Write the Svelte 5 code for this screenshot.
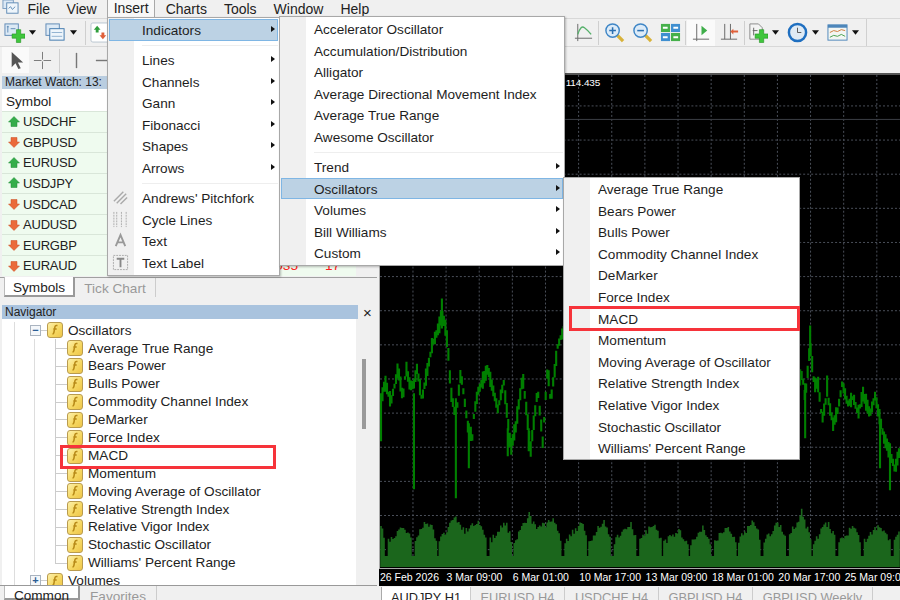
<script>
  const menuNames = ["File", "View", "Insert", "Charts", "Tools", "Window", "Help"];

  const watch = [
    { name: "USDCHF", up: true },
    { name: "GBPUSD", up: false },
    { name: "EURUSD", up: true },
    { name: "USDJPY", up: true },
    { name: "USDCAD", up: false },
    { name: "AUDUSD", up: false },
    { name: "EURGBP", up: false },
    { name: "EURAUD", up: false, ask: "0035", spread: "17" },
  ];

  const oscillators = [
    "Average True Range", "Bears Power", "Bulls Power", "Commodity Channel Index",
    "DeMarker", "Force Index", "MACD", "Momentum", "Moving Average of Oscillator",
    "Relative Strength Index", "Relative Vigor Index", "Stochastic Oscillator",
    "Williams' Percent Range",
  ];

  const insertMenu = [
    ["Indicators", "Lines", "Channels", "Gann", "Fibonacci", "Shapes", "Arrows"],
    ["Andrews' Pitchfork", "Cycle Lines", "Text", "Text Label"],
  ];
  const indicatorsTop = ["Accelerator Oscillator", "Accumulation/Distribution", "Alligator",
    "Average Directional Movement Index", "Average True Range", "Awesome Oscillator"];
  const indicatorsSub = ["Trend", "Oscillators", "Volumes", "Bill Williams", "Custom"];

  const dates = ["26 Feb 2026", "3 Mar 09:00", "6 Mar 01:00", "10 Mar 17:00", "13 Mar 09:00",
    "18 Mar 01:00", "20 Mar 17:00", "25 Mar 09:00"];
  const chartTabs = ["AUDJPY H1", "EURUSD H4", "USDCHF H4", "GBPUSD H4", "GBPUSD Weekly", "VIX"];

  // fixed seed so the chart comes out the same every time
  let seed = 42;
  const rnd = () => {
    seed = (seed * 16807) % 2147483647;
    return seed / 2147483647;
  };

  const lerp = (pts, x) => {
    for (let i = 1; i < pts.length; i++) {
      if (x <= pts[i][0]) {
        const [x0, y0] = pts[i - 1];
        const [x1, y1] = pts[i];
        return y0 + ((y1 - y0) * (x - x0)) / (x1 - x0);
      }
    }
    return pts[pts.length - 1][1];
  };

  const priceLeft = [[380,403],[384,383],[390,403],[397,370],[402,400],[405,367],[409,387],[413,385],[416,370],[421,400],[426,373],[431,347],[438,328],[441,315],[444,325],[447,347],[450,393],[455,420],[460,373],[467,427],[472,440],[473,417],[477,393],[487,370],[497,410],[503,383],[510,450],[515,427],[522,378],[530,450],[537,390],[542,443],[547,367],[550,403],[557,347],[564,327]];
  const priceRight = [[799,380],[802,375],[805,400],[810,345],[814,385],[818,385],[822,420],[827,395],[833,425],[838,410],[842,385],[848,405],[853,398],[858,415],[863,395],[870,415],[875,397],[880,420],[883,435],[890,455],[895,470],[900,450]];
  const spikes = [[380,395,443],[413,395,491],[455,400,500],[468,425,470],[507,430,458],[528,430,453],[441,300,330],[810,327,350],[805,385,440],[827,377,395],[880,425,470],[890,445,492]];

  const priceSeries = (pts, from, to) => {
    let d = "";
    for (let x = from; x <= to; x += 1.5) {
      const y = lerp(pts, x);
      const h = 3 + rnd() * 6;
      d += `M${x} ${(y - h + rnd() * 3).toFixed(1)}V${(y + h).toFixed(1)}`;
    }
    return d;
  };
  const pricePath =
    priceSeries(priceLeft, 380, 563) +
    priceSeries(priceRight, 800, 900) +
    spikes.map(([x, a, b]) => `M${x} ${a}V${b}`).join("");

  const volPeaks = [[380,527],[385,557],[403,528],[412,557],[422,528],[430,525],[437,557],[455,515],[463,537],[480,522],[487,557],[505,522],[512,557],[528,513],[537,533],[553,517],[562,557],[583,522],[587,560],[603,520],[612,557],[630,523],[637,557],[653,525],[662,557],[679,537],[689,560],[703,532],[712,560],[728,527],[737,557],[753,517],[762,557],[778,525],[787,550],[802,508],[812,557],[828,523],[837,557],[853,530],[862,560],[878,528],[892,557],[900,540]];
  const notches = volPeaks.filter(([, y]) => y >= 550).map(([x]) => x);
  let volumePath = "";
  for (let x = 380; x < 900; x += 1.5) {
    // valleys are shallow apart from a thin dark notch every session
    let top = lerp(volPeaks, x);
    if (top > 520) top = 520 + (top - 520) * 0.62;
    top += rnd() * 7 - 1;
    if (notches.some((n) => Math.abs(n - x) < 1.5)) top = 558;
    volumePath += `M${x} ${top.toFixed(1)}V569`;
  }

  const gridX = Array.from({ length: 15 }, (_, i) => 412 + i * 33.2);
  const gridY = Array.from({ length: 14 }, (_, i) => 107 + i * 34.2);
</script>

{#snippet fIcon()}
  <span class="f-icon">
    <svg viewBox="0 0 14 14">
      <path d="M9.500 2.500H8.300Q7.200 2.500 6.900 4L5.900 9.500Q5.600 11 4.500 11M5.300 6H8.700" fill="none" stroke="#b88a18" stroke-width="1.500" />
    </svg>
  </span>
{/snippet}

{#snippet caret()}
  <svg class="caret" viewBox="0 0 8 5"><path d="M0 0H8L4 5Z" fill="#111" /></svg>
{/snippet}

{#snippet plusBadge()}
  <path d="M13 8h4.500v4.500H22V17h-4.500v4.500H13V17H8.500v-4.500H13Z" fill="#3fc63c" stroke="#1c8f1c" stroke-width="0.600" />
{/snippet}

<div class="app">
  <nav class="menubar">
    <svg class="app-icon" viewBox="0 0 18 18">
      <rect x="1" y="0" width="11" height="9" fill="#dbe8f5" stroke="#7a9cc0" />
      <rect x="5" y="3" width="12" height="11" fill="#eef5fb" stroke="#5f8ab5" />
      <path d="M7 9l2-2 2 3 3-3" fill="none" stroke="#5f8ab5" />
    </svg>
    {#each menuNames as name}
      <span class="menu-name" class:open={name === "Insert"}>{name}</span>
    {/each}
  </nav>

  <div class="toolbar">
    <div class="tools-left">
      <svg class="icon" viewBox="0 0 22 22">
        <rect x="1" y="2" width="14" height="12" fill="#dce9f5" stroke="#5f8ab5" />
        <path d="M4 4v7M3 5h2M7 7h5" stroke="#5f8ab5" />
        {@render plusBadge()}
      </svg>
      {@render caret()}
      <svg class="icon profiles" viewBox="0 0 22 22">
        <rect x="1" y="2" width="14" height="12" fill="#dce9f5" stroke="#5f8ab5" />
        <rect x="5" y="7" width="15" height="12" fill="#eef5fb" stroke="#3f77ad" />
        <path d="M7 11h11M7 15h11" stroke="#8fb0d0" />
      </svg>
      {@render caret()}
      <span class="tool-sep"></span>
      <svg class="icon" viewBox="0 0 22 22">
        <rect x="1" y="1" width="20" height="20" rx="2" fill="#fff" stroke="#b8c4d0" />
        <path d="M7.500 4l3.500 4h-2v3h-3V8H4Z" fill="#2f9e3c" />
        <path d="M13.500 18l-3.500-4h2v-3h3v3h2Z" fill="#e0603a" />
      </svg>
    </div>
    <div class="tools-right">
      <span class="tool">
        <svg class="icon" viewBox="0 0 22 22">
          <path d="M5 2v15h15M2 17h3M5 20v-3" fill="none" stroke="#666" />
          <path d="M5 13Q8 3 12 6T19 13" fill="none" stroke="#55b06a" stroke-width="1.400" />
        </svg>
      </span>
      <span class="tool-sep"></span>
      <span class="tool">
        <svg class="icon" viewBox="0 0 22 22">
          <path d="M13 13l7 7" stroke="#d8b23a" stroke-width="3.500" />
          <circle cx="9" cy="9" r="7" fill="#dcebf8" stroke="#3f86c6" stroke-width="1.500" />
          <path d="M5.500 9h7M9 5.500v7" stroke="#2a6fb0" stroke-width="1.600" />
        </svg>
      </span>
      <span class="tool">
        <svg class="icon" viewBox="0 0 22 22">
          <path d="M13 13l7 7" stroke="#d8b23a" stroke-width="3.500" />
          <circle cx="9" cy="9" r="7" fill="#dcebf8" stroke="#3f86c6" stroke-width="1.500" />
          <path d="M5.500 9h7" stroke="#2a6fb0" stroke-width="1.600" />
        </svg>
      </span>
      <span class="tool">
        <svg class="icon" viewBox="0 0 22 22">
          <rect x="1" y="2" width="9.500" height="8.500" fill="#45b04a" />
          <rect x="11.500" y="2" width="9.500" height="8.500" fill="#3f8fd0" />
          <rect x="1" y="11.500" width="9.500" height="8.500" fill="#3f8fd0" />
          <rect x="11.500" y="11.500" width="9.500" height="8.500" fill="#45b04a" />
          <path d="M3 6h5M14 6h5M3 16h5M14 16h5" stroke="#fff" stroke-width="2" />
        </svg>
      </span>
      <span class="tool-sep"></span>
      <span class="tool pressed">
        <svg class="icon" viewBox="0 0 22 22">
          <path d="M6 2v16M2 18h17M6 20v-2" fill="none" stroke="#666" />
          <path d="M11 4l6 5-6 5Z" fill="#3fae4a" />
        </svg>
      </span>
      <span class="tool">
        <svg class="icon" viewBox="0 0 22 22">
          <path d="M6 2v16M2 18h17M12 2v16" fill="none" stroke="#666" />
          <path d="M20 9h-5v-2l-3 3 3 3v-2h5Z" fill="#e0603a" />
        </svg>
      </span>
      <span class="tool-sep"></span>
      <span class="tool drop">
        <svg class="icon" viewBox="0 0 22 22">
          <path d="M3 2h9l4 4v12H3Z" fill="#f4f4f4" stroke="#888" />
          <path d="M7 6v8M6 9h5" stroke="#666" />
          {@render plusBadge()}
        </svg>
        {@render caret()}
      </span>
      <span class="tool drop">
        <svg class="icon" viewBox="0 0 22 22">
          <circle cx="11" cy="11" r="9" fill="#dfeaf4" stroke="#1f6fc0" stroke-width="2.600" />
          <path d="M11 6v5h4" fill="none" stroke="#555" />
        </svg>
        {@render caret()}
      </span>
      <span class="tool drop">
        <svg class="icon" viewBox="0 0 22 22">
          <rect x="1" y="3" width="20" height="16" fill="#f3f6f3" stroke="#4d86ba" />
          <rect x="1" y="3" width="20" height="3" fill="#4d86ba" />
          <path d="M3 11l4-2 4 1 4-2 4 1" fill="none" stroke="#cf7a3a" />
          <path d="M3 16l4-2 4 1 4-2 4 2" fill="none" stroke="#45a04a" />
        </svg>
        {@render caret()}
      </span>
    </div>
  </div>

  <div class="toolbar second">
    <span class="tool slim pressed">
      <svg class="icon" viewBox="0 0 22 22"><path d="M7 2v16l4-4 3 6 2.500-1-3-6h5.500Z" fill="#555" /></svg>
    </span>
    <span class="tool slim">
      <svg class="icon" viewBox="0 0 22 22"><path d="M11 2v8M11 12v8M2 11h8M12 11h8" stroke="#777" /></svg>
    </span>
    <span class="tool-sep"></span>
    <span class="tool slim">
      <svg class="icon" viewBox="0 0 22 22"><path d="M11 3v16" stroke="#777" stroke-width="1.500" /></svg>
    </span>
    <span class="tool slim">
      <svg class="icon" viewBox="0 0 22 22"><path d="M3 11h16" stroke="#777" stroke-width="1.500" /></svg>
    </span>
  </div>

  <main class="workspace">
    <section class="side">
      <div class="watch">
        <header class="caption">Market Watch: 13:</header>
        <div class="watch-head">Symbol</div>
        {#each watch as row}
          <div class="watch-row">
            <svg class="arrow" viewBox="0 0 14 14">
              {#if row.up}
                <path d="M7 1.500l5.500 5.500H10v4.500H4V7H1.500Z" fill="#35ad4a" stroke="#1f8a35" stroke-width="0.500" />
              {:else}
                <path d="M7 12.500L1.500 7H4V2.500h6V7h2.500Z" fill="#ea6a3a" stroke="#c94f24" stroke-width="0.500" />
              {/if}
            </svg>
            <span class="sym">{row.name}</span>
            <span class="ask">{row.ask ?? ""}</span>
            <span class="spread">{row.spread ?? ""}</span>
          </div>
        {/each}
      </div>
      <div class="tabs">
        <span class="tab active">Symbols</span>
        <span class="tab tick">Tick Chart</span>
      </div>

      <div class="navigator">
        <header class="nav-head">
          <span class="caption nav-caption">Navigator</span>
          <span class="close">×</span>
        </header>
        <div class="tree-wrap">
          <div class="tree">
            <div class="node top">
              <span class="box">−</span>
              {@render fIcon()}
              <span>Oscillators</span>
            </div>
            {#each oscillators as name, i}
              <div class="node leaf" class:last={i === oscillators.length - 1}>
                {@render fIcon()}
                <span>{name}</span>
              </div>
            {/each}
            <div class="node top">
              <span class="box">+</span>
              {@render fIcon()}
              <span>Volumes</span>
            </div>
          </div>
          <div class="scrollbar"><span class="thumb"></span></div>
        </div>
        <div class="tabs nav-tabs">
          <span class="tab active">Common</span>
          <span class="tab">Favorites</span>
        </div>
      </div>
    </section>

    <section class="chart-area">
      <div class="chart">
        <svg class="plot" viewBox="379 76 521 494">
          {#each gridY as y}
            <line x1="379" x2="900" y1={y} y2={y} class="grid" />
          {/each}
          {#each gridX as x}
            <line x1={x} x2={x} y1="76" y2="569" class="grid" />
          {/each}
          <line x1="379" x2="900" y1="120.500" y2="120.500" stroke="#3c3f46" />
          <path d={volumePath} stroke="#1b661c" stroke-width="1.600" fill="none" />
          <path d={pricePath} stroke="#008000" stroke-width="2.100" fill="none" />
          <text x="565" y="87" class="price">114.435</text>
        </svg>
        <div class="axis">
          {#each dates as d}
            <span>{d}</span>
          {/each}
        </div>
      </div>
      <div class="chart-tabs">
        {#each chartTabs as name, i}
          <span class="chart-tab" class:active={i === 0} class:wide={name === "GBPUSD Weekly"}>{name}</span>
        {/each}
      </div>
    </section>
  </main>

  <div class="menu insert">
    {#each insertMenu[0] as name, i}
      <div class="item" class:hot={i === 0}>{name}<i class="more"></i></div>
      {#if i === 0}<div class="sep"></div>{/if}
    {/each}
    <div class="sep"></div>
    {#each insertMenu[1] as name, i}
      <div class="item">
        <svg class="menu-icon" viewBox="0 0 18 18">
          {#if i === 0}
            <path d="M2 13L12 3M5 15L15 5M9 16L16 9" stroke="#aaa" stroke-width="1.500" />
          {:else if i === 1}
            <path d="M2 1v16M5 1v16M10 1v16M15 1v16" stroke="#aaa" stroke-dasharray="2 1" />
          {:else if i === 2}
            <path d="M4 15L9 3l5 12M6 11h6" fill="none" stroke="#999" stroke-width="2" />
          {:else}
            <rect x="1.500" y="1.500" width="15" height="15" fill="none" stroke="#aaa" stroke-dasharray="2 1" />
            <path d="M5 5h8M9 5v9" stroke="#888" stroke-width="2" />
          {/if}
        </svg>
        {name}
      </div>
    {/each}
  </div>

  <div class="menu indicators">
    {#each indicatorsTop as name}
      <div class="item">{name}</div>
    {/each}
    <div class="sep"></div>
    {#each indicatorsSub as name}
      <div class="item" class:hot={name === "Oscillators"}>{name}<i class="more"></i></div>
    {/each}
  </div>

  <div class="menu osc">
    {#each oscillators as name}
      <div class="item">{name}</div>
    {/each}
  </div>

  <div class="callout callout-nav"></div>
  <div class="callout callout-menu"></div>
</div>

<style>
  :global(body) {
    margin: 0;
    background: #f0f0f0;
  }
  .app {
    position: relative;
    width: 900px;
    height: 600px;
    overflow: hidden;
    display: flex;
    flex-direction: column;
    background: #f0f0f0;
    color: #222;
    font: 13.600px/1 "Liberation Sans", sans-serif;
  }

  .menubar {
    height: 17px;
    display: flex;
    align-items: center;
    padding-left: 2px;
    font-size: 14px;
  }
  .app-icon {
    width: 17px;
    height: 17px;
  }
  .menu-name {
    padding: 0 8.500px;
  }
  .menu-name:nth-of-type(1) {
    padding-right: 8px;
  }
  .menu-name.open {
    height: 17px;
    line-height: 17px;
    box-sizing: border-box;
    margin: 0 2.500px 0 1.500px;
    padding: 0 5px 0 6px;
    border-left: 1px solid #a8a8a8;
    border-right: 1px solid #a8a8a8;
    background: #f8f8f8;
  }

  .toolbar {
    height: 27px;
    margin-top: 1px;
    display: flex;
    justify-content: space-between;
    border-top: 1px solid #d8d8d8;
    border-bottom: 1px solid #d8d8d8;
    padding-right: 33px;
  }
  .tools-left,
  .tools-right {
    display: flex;
    align-items: center;
  }
  .tools-left {
    padding-left: 4px;
  }
  .tools-right {
    border-right: 1px solid #d0d0d0;
  }
  .icon {
    width: 21px;
    height: 21px;
    flex: none;
  }
  .profiles {
    margin-left: 9px;
  }
  .caret {
    width: 7px;
    height: 5px;
    margin-left: 4px;
    flex: none;
  }
  .tool {
    width: 28px;
    height: 26px;
    display: flex;
    align-items: center;
    justify-content: center;
  }
  .tool.pressed {
    background: #fafafa;
  }
  .tool.drop {
    width: 40px;
    justify-content: flex-start;
    padding-left: 1px;
    box-sizing: border-box;
  }
  .tool.slim {
    width: 27px;
  }
  .tool-sep {
    width: 1px;
    height: 24px;
    margin: 0 1px;
    background: #cfcfcf;
    align-self: center;
  }
  .tools-left .tool-sep {
    margin: 0 4px 0 8px;
  }
  .second {
    justify-content: flex-start;
    margin-top: 0;
    padding-left: 2px;
    border-top: 0;
    border-bottom: 0;
  }
  .second .tool-sep {
    margin: 0 3px;
  }

  .workspace {
    flex: 1;
    min-height: 0;
    display: flex;
    padding-top: 2px;
  }
  .side {
    width: 377px;
    flex: none;
    display: flex;
    flex-direction: column;
  }
  .watch {
    margin-left: 2px;
    width: 354px;
  }
  .caption {
    display: block;
    height: 13px;
    line-height: 13px;
    padding-left: 3px;
    font-size: 12px;
    background: #b9cde0;
  }
  .watch-head {
    height: 22px;
    line-height: 26px;
    padding-left: 4px;
    background: #fff;
  }
  .watch-row {
    height: 20.570px;
    display: flex;
    align-items: center;
    box-sizing: border-box;
    padding-left: 5px;
    background: #effbef;
    border-top: 1px solid #d9e6d9;
  }
  .arrow {
    width: 14px;
    height: 14px;
    flex: none;
    margin-right: 2px;
  }
  .sym {
    width: 92px;
    font-size: 13px;
    letter-spacing: -0.200px;
  }
  .ask,
  .spread {
    color: #f22;
    text-align: right;
  }
  .ask {
    width: 183px;
  }
  .spread {
    width: 42px;
  }

  .tabs {
    display: flex;
    height: 19px;
    margin-top: 1px;
    padding-left: 4px;
    border-top: 1px solid #a0a0a0;
  }
  .tab {
    padding: 4px 0 0;
    width: 71px;
    text-align: center;
    color: #999;
    border-right: 1px solid #ccc;
  }
  .tab.tick {
    width: 80px;
  }
  .tab.active {
    color: #222;
    background: #fff;
    border-left: 1px solid #bbb;
    border-right: 2px solid #999;
    border-bottom: 2px solid #999;
    box-sizing: border-box;
    margin-top: -1px;
  }

  .navigator {
    flex: 1;
    min-height: 0;
    margin-top: 8.500px;
    display: flex;
    flex-direction: column;
  }
  .nav-head {
    display: flex;
    align-items: center;
    height: 14px;
    padding-left: 2px;
  }
  .nav-caption {
    flex: 1;
    height: 14px;
    line-height: 14px;
    background: #a9c3de;
  }
  .close {
    width: 19px;
    text-align: center;
    font-size: 15px;
    color: #222;
  }
  .tree-wrap {
    flex: 1;
    min-height: 0;
    display: flex;
    margin: 0 5px 0 2px;
    overflow: hidden;
  }
  .tree {
    flex: 1;
    padding-top: 2.500px;
    background: #fff;
  }
  .node {
    height: 17.900px;
    display: flex;
    align-items: center;
    gap: 5px;
  }
  .node.top {
    padding-left: 28px;
    background:
      linear-gradient(#ddd, #ddd) 12px 0 / 1px 100% no-repeat,
      linear-gradient(#ccc, #ccc) 37px 50% / 8px 1px no-repeat;
  }
  .node.leaf {
    padding-left: 65px;
    background:
      linear-gradient(#ddd, #ddd) 12px 0 / 1px 100% no-repeat,
      linear-gradient(#ddd, #ddd) 32px 0 / 1px 100% no-repeat,
      linear-gradient(#ccc, #ccc) 53px 0 / 1px 100% no-repeat,
      linear-gradient(#ccc, #ccc) 53px 50% / 12px 1px no-repeat;
  }
  .node.leaf.last {
    background:
      linear-gradient(#ddd, #ddd) 12px 0 / 1px 100% no-repeat,
      linear-gradient(#ddd, #ddd) 32px 0 / 1px 100% no-repeat,
      linear-gradient(#ccc, #ccc) 53px 0 / 1px 50% no-repeat,
      linear-gradient(#ccc, #ccc) 53px 50% / 12px 1px no-repeat;
  }
  .box {
    width: 9px;
    height: 9px;
    line-height: 8px;
    font-size: 11px;
    font-weight: bold;
    text-align: center;
    color: #2a5c94;
    background: #f4f7fa;
    border: 1px solid #aab4c0;
    margin-right: 1px;
  }
  .f-icon {
    width: 16px;
    height: 16px;
    flex: none;
    box-sizing: border-box;
    display: block;
    border: 1px solid #b99b4e;
    border-radius: 3px;
    background: linear-gradient(135deg, #fdf0a8, #f5d65f 60%, #eec54a);
  }
  .f-icon svg {
    display: block;
    width: 14px;
    height: 14px;
  }
  .scrollbar {
    width: 16px;
    background: #f0f0f0;
    padding-top: 40px;
    box-sizing: border-box;
    display: flex;
    justify-content: center;
  }
  .thumb {
    width: 4px;
    height: 70px;
    background: #9a9a9a;
  }
  .nav-tabs {
    flex: none;
    margin-top: 0;
    height: 14px;
    overflow: hidden;
    border-top: 1px solid #999;
  }
  .nav-tabs .tab {
    width: 76px;
    flex: none;
    padding-top: 4px;
  }

  .chart-area {
    flex: 1;
    min-width: 0;
    display: flex;
    flex-direction: column;
    margin-left: 2px;
  }
  .chart {
    background: #000;
    border-top: 2px solid #555;
    margin-top: -3px;
  }
  .plot {
    display: block;
    width: 521px;
    height: 494px;
    border-left: 1px solid #aaa;
    box-sizing: border-box;
    border-bottom: 1px solid #aaa;
  }
  .grid {
    stroke: #4a4f59;
    stroke-dasharray: 2 2;
  }
  .price {
    fill: #fff;
    font: 10px "Liberation Sans", sans-serif;
    letter-spacing: -0.100px;
  }
  .axis {
    height: 17px;
    display: flex;
    align-items: center;
    color: #fff;
    font-size: 10.500px;
    overflow: hidden;
    padding-left: 1px;
  }
  .axis span {
    flex: none;
    width: 66.400px;
    white-space: nowrap;
  }
  .chart-tabs {
    display: flex;
    height: 14px;
    padding-left: 2px;
    margin-top: 1px;
    overflow: hidden;
    font-size: 12.800px;
  }
  .chart-tab {
    width: 93px;
    padding-top: 5px;
    text-align: center;
    color: #999;
    border-right: 1px solid #ccc;
    flex: none;
  }
  .chart-tab.active {
    width: 88px;
    color: #222;
    background: #fff;
    border-left: 1px solid #aaa;
  }
  .chart-tab.wide {
    width: 119px;
  }

  .menu {
    position: absolute;
    box-sizing: border-box;
    background: linear-gradient(to right, #f0f0f0 26px, #fff 26px);
    border: 1px solid #a8a8a8;
    box-shadow: 1px 1px 2px rgba(0, 0, 0, 0.25);
    padding: 1px 1px;
  }
  .insert {
    left: 107px;
    top: 17px;
    width: 173px;
    height: 259px;
  }
  .indicators {
    left: 279px;
    top: 16px;
    width: 286px;
    height: 250px;
  }
  .osc {
    left: 563px;
    top: 177px;
    width: 237px;
    height: 283px;
    padding-top: 0;
  }
  .item {
    position: relative;
    height: 21.600px;
    line-height: 23px;
    padding-left: 33px;
    box-sizing: border-box;
    white-space: nowrap;
    color: #1e1e1e;
  }
  .item.hot {
    background: #bcd2e4;
    box-shadow: inset 0 0 0 1px #7fb6e4;
  }
  .more {
    position: absolute;
    right: 3px;
    top: 7px;
    border-left: 4px solid #111;
    border-top: 3.500px solid transparent;
    border-bottom: 3.500px solid transparent;
  }
  .menu-icon {
    position: absolute;
    left: 3px;
    top: 2px;
    width: 17px;
    height: 17px;
  }
  .sep {
    height: 8.400px;
    margin-left: 33px;
    background: linear-gradient(#eee, #eee) 0 4px / 100% 1px no-repeat;
  }

  .callout {
    position: absolute;
    box-sizing: border-box;
    border: 3px solid #f6333a;
  }
  .callout-nav {
    left: 60px;
    top: 445px;
    width: 216px;
    height: 24px;
  }
  .callout-menu {
    left: 569px;
    top: 306px;
    width: 231px;
    height: 25px;
  }
</style>
